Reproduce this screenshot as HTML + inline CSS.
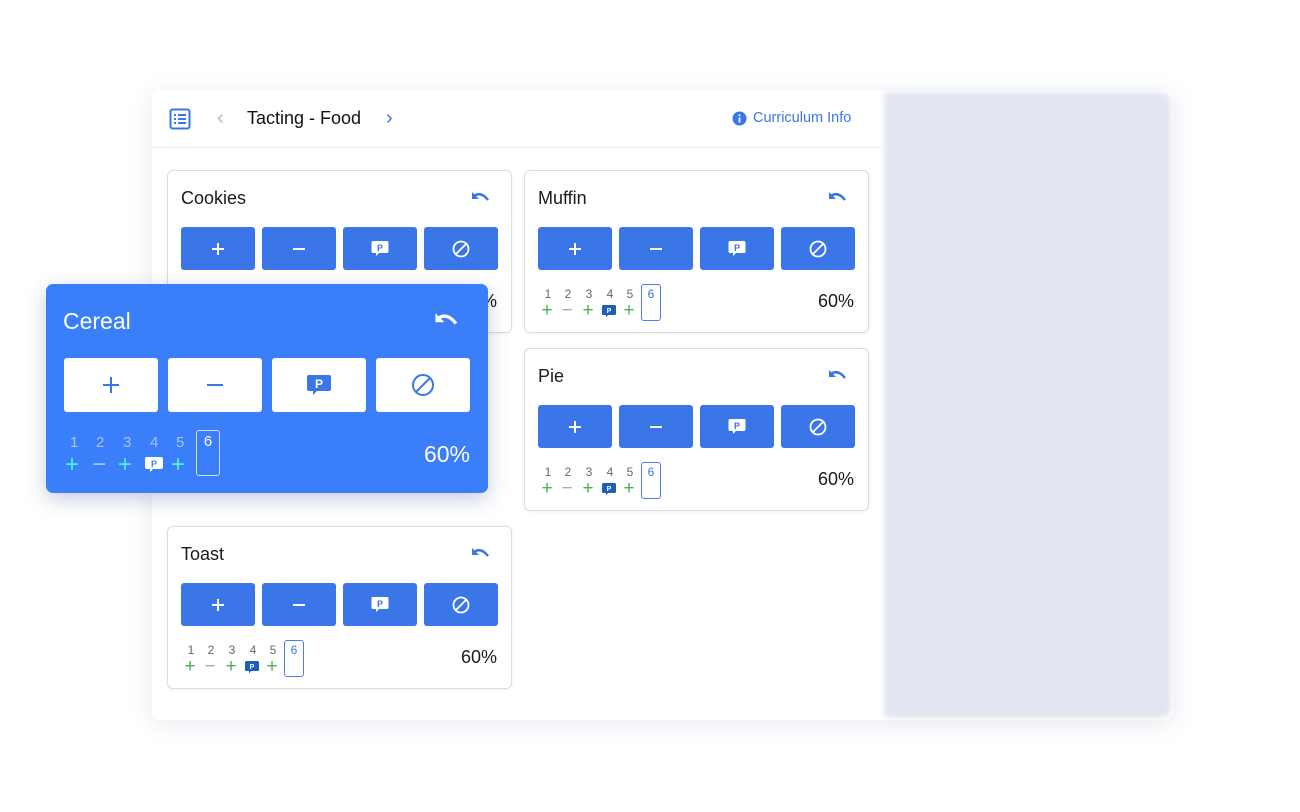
<!DOCTYPE html>
<html><head><style>
*{box-sizing:border-box;margin:0;padding:0}
body{width:1300px;height:812px;background:#fff;font-family:"Liberation Sans",sans-serif;position:relative;overflow:hidden;color:#1a1a1a}
.abs{position:absolute}
.panel{left:152px;top:90px;width:1021px;height:630px;background:#fff;border-radius:8px;box-shadow:0 4px 24px rgba(60,80,130,.12)}
.grey{left:884px;top:92px;width:287px;height:626px;background:#e1e6f0;border-radius:0 10px 10px 0;filter:blur(3px)}
.hline{left:152px;top:147px;width:730px;height:1px;background:#ececec}
.card{position:absolute;width:345px;height:163px;border:1px solid #dcdcdc;border-radius:6px;background:#fff;box-shadow:0 1px 3px rgba(0,0,0,.06)}
.card .t{position:absolute;left:13px;top:17px;font-size:18px}
.card .u{position:absolute;right:20px;top:20px}
.btn{position:absolute;top:56px;width:74px;height:43px;background:#3a76e8;border-radius:3px;display:flex;align-items:center;justify-content:center}
.nums{position:absolute;left:17px;top:116px;font-size:12px;color:#666}
.nums span{position:absolute;width:12px;text-align:center}
.sg{position:absolute;top:133px;font-size:19px;line-height:14px;color:#4caf50;width:12px;text-align:center}
.box6{position:absolute;top:113px;width:20px;height:37px;border:1.5px solid #4a80ea;border-radius:3px;color:#3a76e8;font-size:12px;text-align:center;padding-top:2px}
.pct{position:absolute;right:14px;top:120px;font-size:18px}
</style></head><body>
<div class="abs panel"></div>
<div class="abs grey"></div>
<div class="abs hline"></div>
<svg class="abs" style="left:169px;top:108px" width="22" height="22" viewBox="0 0 22 22"><rect x="1.5" y="1.5" width="19" height="19" rx="2" fill="none" stroke="#3a76e8" stroke-width="2"/><g fill="#3a76e8"><rect x="5" y="6" width="2" height="2"/><rect x="9" y="6" width="8" height="2"/><rect x="5" y="10" width="2" height="2"/><rect x="9" y="10" width="8" height="2"/><rect x="5" y="14" width="2" height="2"/><rect x="9" y="14" width="8" height="2"/></g></svg>
<div class="abs" style="left:217px;top:107px;font-size:20px;color:#bbb">‹</div>
<div class="abs" style="left:247px;top:108px;font-size:18px;color:#111">Tacting - Food</div>
<div class="abs" style="left:386px;top:107px;font-size:20px;color:#3a76e8">›</div>
<svg class="abs" style="left:732px;top:111px" width="15" height="15"><circle cx="7.5" cy="7.5" r="7" fill="#3a76e8"/><rect x="6.6" y="6.5" width="1.8" height="5" fill="#fff"/><circle cx="7.5" cy="4.3" r="1" fill="#fff"/></svg>
<div class="abs" style="left:753px;top:110px;font-size:14.5px;color:#3a76e8">Curriculum Info</div>

<div class="card" style="left:167px;top:170px"><div class="t">Cookies</div>
<svg class="u" width="20" height="14" viewBox="0 0 20 14"><path d="M3 5 Q10 0 17 9" fill="none" stroke="#3a76e8" stroke-width="2.5"/><path d="M1 1 L1 8 L8 8Z" fill="#3a76e8"/></svg>
<div class="btn" style="left:13px"><svg width="14" height="14"><path d="M7 1v12M1 7h12" stroke="#fff" stroke-width="2"/></svg></div>
<div class="btn" style="left:94px"><svg width="14" height="14"><path d="M1 7h12" stroke="#fff" stroke-width="2"/></svg></div>
<div class="btn" style="left:175px"><svg width="18" height="18"><path d="M2 1h14a1.5 1.5 0 0 1 1.5 1.5v9a1.5 1.5 0 0 1-1.5 1.5H8l-3 3v-3H2A1.5 1.5 0 0 1 .5 11.5v-9A1.5 1.5 0 0 1 2 1z" fill="#fff"/><text x="9" y="11" font-size="9" font-weight="bold" fill="#3a76e8" text-anchor="middle" font-family="Liberation Sans">P</text></svg></div>
<div class="btn" style="left:256px"><svg width="18" height="18"><circle cx="9" cy="9" r="7.5" fill="none" stroke="#fff" stroke-width="1.8"/><path d="M4 14L14 4" stroke="#fff" stroke-width="1.8"/></svg></div>
<div class="pct">60%</div></div>

<div class="card" style="left:524px;top:170px"><div class="t">Muffin</div>
<svg class="u" width="20" height="14" viewBox="0 0 20 14"><path d="M3 5 Q10 0 17 9" fill="none" stroke="#3a76e8" stroke-width="2.5"/><path d="M1 1 L1 8 L8 8Z" fill="#3a76e8"/></svg>
<div class="btn" style="left:13px"><svg width="14" height="14"><path d="M7 1v12M1 7h12" stroke="#fff" stroke-width="2"/></svg></div>
<div class="btn" style="left:94px"><svg width="14" height="14"><path d="M1 7h12" stroke="#fff" stroke-width="2"/></svg></div>
<div class="btn" style="left:175px"><svg width="18" height="18"><path d="M2 1h14a1.5 1.5 0 0 1 1.5 1.5v9a1.5 1.5 0 0 1-1.5 1.5H8l-3 3v-3H2A1.5 1.5 0 0 1 .5 11.5v-9A1.5 1.5 0 0 1 2 1z" fill="#fff"/><text x="9" y="11" font-size="9" font-weight="bold" fill="#3a76e8" text-anchor="middle" font-family="Liberation Sans">P</text></svg></div>
<div class="btn" style="left:256px"><svg width="18" height="18"><circle cx="9" cy="9" r="7.5" fill="none" stroke="#fff" stroke-width="1.8"/><path d="M4 14L14 4" stroke="#fff" stroke-width="1.8"/></svg></div>
<div class="nums"><span style="left:0">1</span><span style="left:20px">2</span><span style="left:41px">3</span><span style="left:62px">4</span><span style="left:82px">5</span></div>
<div class="sg" style="left:16px">+</div><div class="sg" style="left:36px;color:#aaa">−</div><div class="sg" style="left:57px">+</div>
<svg class="abs" style="left:77px;top:134px" width="14" height="13"><path d="M1.5 0h11a1.5 1.5 0 0 1 1.5 1.5v7a1.5 1.5 0 0 1-1.5 1.5H6l-2 2.5V10H1.5A1.5 1.5 0 0 1 0 8.5v-7A1.5 1.5 0 0 1 1.5 0z" fill="#1d5fb8"/><text x="7" y="8" font-size="7" font-weight="bold" fill="#fff" text-anchor="middle" font-family="Liberation Sans">P</text></svg>
<div class="sg" style="left:98px">+</div>
<div class="box6" style="left:116px">6</div>
<div class="pct">60%</div></div>

<div class="card" style="left:524px;top:348px"><div class="t">Pie</div>
<svg class="u" width="20" height="14" viewBox="0 0 20 14"><path d="M3 5 Q10 0 17 9" fill="none" stroke="#3a76e8" stroke-width="2.5"/><path d="M1 1 L1 8 L8 8Z" fill="#3a76e8"/></svg>
<div class="btn" style="left:13px"><svg width="14" height="14"><path d="M7 1v12M1 7h12" stroke="#fff" stroke-width="2"/></svg></div>
<div class="btn" style="left:94px"><svg width="14" height="14"><path d="M1 7h12" stroke="#fff" stroke-width="2"/></svg></div>
<div class="btn" style="left:175px"><svg width="18" height="18"><path d="M2 1h14a1.5 1.5 0 0 1 1.5 1.5v9a1.5 1.5 0 0 1-1.5 1.5H8l-3 3v-3H2A1.5 1.5 0 0 1 .5 11.5v-9A1.5 1.5 0 0 1 2 1z" fill="#fff"/><text x="9" y="11" font-size="9" font-weight="bold" fill="#3a76e8" text-anchor="middle" font-family="Liberation Sans">P</text></svg></div>
<div class="btn" style="left:256px"><svg width="18" height="18"><circle cx="9" cy="9" r="7.5" fill="none" stroke="#fff" stroke-width="1.8"/><path d="M4 14L14 4" stroke="#fff" stroke-width="1.8"/></svg></div>
<div class="nums"><span style="left:0">1</span><span style="left:20px">2</span><span style="left:41px">3</span><span style="left:62px">4</span><span style="left:82px">5</span></div>
<div class="sg" style="left:16px">+</div><div class="sg" style="left:36px;color:#aaa">−</div><div class="sg" style="left:57px">+</div>
<svg class="abs" style="left:77px;top:134px" width="14" height="13"><path d="M1.5 0h11a1.5 1.5 0 0 1 1.5 1.5v7a1.5 1.5 0 0 1-1.5 1.5H6l-2 2.5V10H1.5A1.5 1.5 0 0 1 0 8.5v-7A1.5 1.5 0 0 1 1.5 0z" fill="#1d5fb8"/><text x="7" y="8" font-size="7" font-weight="bold" fill="#fff" text-anchor="middle" font-family="Liberation Sans">P</text></svg>
<div class="sg" style="left:98px">+</div>
<div class="box6" style="left:116px">6</div>
<div class="pct">60%</div></div>

<div class="card" style="left:167px;top:526px"><div class="t">Toast</div>
<svg class="u" width="20" height="14" viewBox="0 0 20 14"><path d="M3 5 Q10 0 17 9" fill="none" stroke="#3a76e8" stroke-width="2.5"/><path d="M1 1 L1 8 L8 8Z" fill="#3a76e8"/></svg>
<div class="btn" style="left:13px"><svg width="14" height="14"><path d="M7 1v12M1 7h12" stroke="#fff" stroke-width="2"/></svg></div>
<div class="btn" style="left:94px"><svg width="14" height="14"><path d="M1 7h12" stroke="#fff" stroke-width="2"/></svg></div>
<div class="btn" style="left:175px"><svg width="18" height="18"><path d="M2 1h14a1.5 1.5 0 0 1 1.5 1.5v9a1.5 1.5 0 0 1-1.5 1.5H8l-3 3v-3H2A1.5 1.5 0 0 1 .5 11.5v-9A1.5 1.5 0 0 1 2 1z" fill="#fff"/><text x="9" y="11" font-size="9" font-weight="bold" fill="#3a76e8" text-anchor="middle" font-family="Liberation Sans">P</text></svg></div>
<div class="btn" style="left:256px"><svg width="18" height="18"><circle cx="9" cy="9" r="7.5" fill="none" stroke="#fff" stroke-width="1.8"/><path d="M4 14L14 4" stroke="#fff" stroke-width="1.8"/></svg></div>
<div class="nums"><span style="left:0">1</span><span style="left:20px">2</span><span style="left:41px">3</span><span style="left:62px">4</span><span style="left:82px">5</span></div>
<div class="sg" style="left:16px">+</div><div class="sg" style="left:36px;color:#aaa">−</div><div class="sg" style="left:57px">+</div>
<svg class="abs" style="left:77px;top:134px" width="14" height="13"><path d="M1.5 0h11a1.5 1.5 0 0 1 1.5 1.5v7a1.5 1.5 0 0 1-1.5 1.5H6l-2 2.5V10H1.5A1.5 1.5 0 0 1 0 8.5v-7A1.5 1.5 0 0 1 1.5 0z" fill="#1d5fb8"/><text x="7" y="8" font-size="7" font-weight="bold" fill="#fff" text-anchor="middle" font-family="Liberation Sans">P</text></svg>
<div class="sg" style="left:98px">+</div>
<div class="box6" style="left:116px">6</div>
<div class="pct">60%</div></div>

<div class="abs" style="left:46px;top:284px;width:442px;height:209px;background:#3b7ef9;border-radius:7px;box-shadow:0 6px 20px rgba(30,60,140,.25);color:#fff">
<div class="abs" style="left:17px;top:24px;font-size:23px">Cereal</div>
<svg class="abs" style="left:388px;top:28px" width="26" height="18" viewBox="0 0 20 14"><path d="M3 5 Q10 0 17 9" fill="none" stroke="#fff" stroke-width="2.5"/><path d="M1 1 L1 8 L8 8Z" fill="#fff"/></svg>
<div class="abs" style="left:18px;top:74px;width:94px;height:54px;background:#fff;border-radius:3px;display:flex;align-items:center;justify-content:center"><svg width="18" height="18"><path d="M9 1v16M1 9h16" stroke="#3a76e8" stroke-width="2"/></svg></div>
<div class="abs" style="left:122px;top:74px;width:94px;height:54px;background:#fff;border-radius:3px;display:flex;align-items:center;justify-content:center"><svg width="18" height="18"><path d="M1 9h16" stroke="#3a76e8" stroke-width="2"/></svg></div>
<div class="abs" style="left:226px;top:74px;width:94px;height:54px;background:#fff;border-radius:3px;display:flex;align-items:center;justify-content:center"><svg width="24" height="22"><path d="M2 1h20a2 2 0 0 1 2 2v12a2 2 0 0 1-2 2H10l-4 4v-4H2a2 2 0 0 1-2-2V3a2 2 0 0 1 2-2z" fill="#3a76e8"/><text x="12" y="14" font-size="12" font-weight="bold" fill="#fff" text-anchor="middle" font-family="Liberation Sans">P</text></svg></div>
<div class="abs" style="left:330px;top:74px;width:94px;height:54px;background:#fff;border-radius:3px;display:flex;align-items:center;justify-content:center"><svg width="24" height="24"><circle cx="12" cy="12" r="10" fill="none" stroke="#3a76e8" stroke-width="2"/><path d="M5 19L19 5" stroke="#3a76e8" stroke-width="2"/></svg></div>
<div class="abs" style="left:24px;top:150px;font-size:15px;color:#a9c4fb;width:150px"><span class="abs" style="left:0">1</span><span class="abs" style="left:26px">2</span><span class="abs" style="left:53px">3</span><span class="abs" style="left:80px">4</span><span class="abs" style="left:106px">5</span></div>
<div class="abs" style="left:19px;top:171px;font-size:24px;line-height:20px;color:#4ef0e8">+</div>
<div class="abs" style="left:46px;top:171px;font-size:24px;line-height:20px;color:#a9c4fb">−</div>
<div class="abs" style="left:72px;top:171px;font-size:24px;line-height:20px;color:#4ef0e8">+</div>
<svg class="abs" style="left:99px;top:173px" width="18" height="16"><path d="M2 0h14a2 2 0 0 1 2 2v8a2 2 0 0 1-2 2H8l-3 3v-3H2a2 2 0 0 1-2-2V2a2 2 0 0 1 2-2z" fill="#fff"/><text x="9" y="10" font-size="9" font-weight="bold" fill="#3b7ef9" text-anchor="middle" font-family="Liberation Sans">P</text></svg>
<div class="abs" style="left:125px;top:171px;font-size:24px;line-height:20px;color:#4ef0e8">+</div>
<div class="abs" style="left:150px;top:146px;width:24px;height:46px;border:1.5px solid #cfe0ff;border-radius:3px;text-align:center;font-size:15px;padding-top:2px">6</div>
<div class="abs" style="right:18px;top:157px;font-size:23px">60%</div>
</div>
</body></html>
